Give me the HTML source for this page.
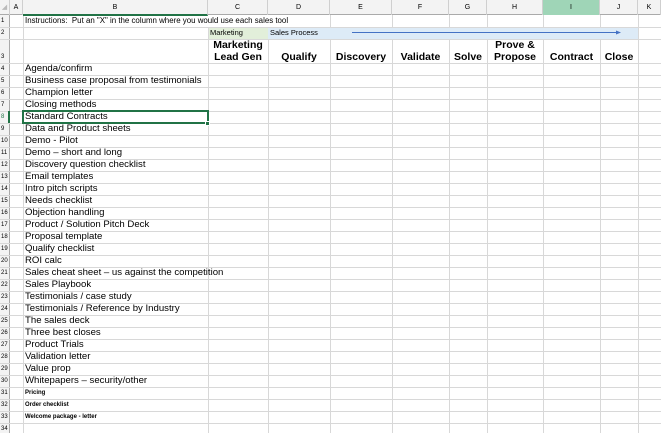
<!DOCTYPE html>
<html><head><meta charset="utf-8"><style>
*{margin:0;padding:0;box-sizing:border-box}
html,body{width:661px;height:433px;overflow:hidden}
body{background:#fff;font-family:"Liberation Sans",sans-serif;position:relative}
.a{position:absolute;white-space:nowrap}
.v{position:absolute;top:39px;height:394px;width:1px;background:#d8d8d8}
.hl{position:absolute;left:0;width:661px;height:1px;background:#d8d8d8}
.ch{position:absolute;top:0;height:15px;font-size:7px;text-align:center;line-height:15px;border-right:1px solid #cfcfcf}
.rn{position:absolute;left:1px;font-size:6px;line-height:12px}
.t{position:absolute;left:25px;font-size:9.6px;line-height:12px;white-space:nowrap}
.s{font-size:6px;font-weight:bold}
.hd{position:absolute;top:39px;height:24px;font-weight:bold;font-size:10.5px;text-align:center;line-height:12px;display:flex;align-items:flex-end;justify-content:center}
</style></head><body>
<div class="a" style="left:0;top:0;width:661px;height:15px;background:#f3f3f3;border-bottom:1px solid #aaa"></div>
<div class="a" style="left:0;top:15px;width:10px;height:418px;background:#f3f3f3;border-right:1px solid #aaa"></div>
<div class="a" style="left:208px;top:27px;width:60px;height:12px;background:#e2efda"></div>
<div class="a" style="left:268px;top:27px;width:370px;height:12px;background:#ddebf7"></div>
<div class="hl" style="top:27px"></div><div class="hl" style="top:39px"></div><div class="hl" style="top:63px"></div>
<div class="a" style="left:0;top:75px;width:661px;height:358px;background:repeating-linear-gradient(to bottom,#d8d8d8 0,#d8d8d8 1px,transparent 1px,transparent 12px)"></div>
<div class="v" style="left:23px;top:15px;height:418px"></div><div class="v" style="left:208px;top:27px;height:406px"></div><div class="v" style="left:268px"></div>
<div class="v" style="left:330px"></div><div class="v" style="left:392px"></div><div class="v" style="left:449px"></div>
<div class="v" style="left:487px"></div><div class="v" style="left:543px"></div><div class="v" style="left:600px"></div>
<div class="v" style="left:638px;top:15px;height:418px"></div>
<div class="a" style="left:330px;top:15px;width:1px;height:12px;background:#d8d8d8"></div>
<div class="a" style="left:392px;top:15px;width:1px;height:12px;background:#d8d8d8"></div>
<div class="a" style="left:449px;top:15px;width:1px;height:12px;background:#d8d8d8"></div>
<div class="a" style="left:487px;top:15px;width:1px;height:12px;background:#d8d8d8"></div>
<div class="a" style="left:543px;top:15px;width:1px;height:12px;background:#d8d8d8"></div>
<div class="a" style="left:600px;top:15px;width:1px;height:12px;background:#d8d8d8"></div>
<div class="ch" style="left:0;width:10px;color:#bbb">◢</div>
<div class="ch" style="left:10px;width:13px">A</div>
<div class="ch" style="left:23px;width:185px;border-bottom:2px solid #217346;height:16px">B</div>
<div class="ch" style="left:208px;width:60px">C</div>
<div class="ch" style="left:268px;width:62px">D</div>
<div class="ch" style="left:330px;width:62px">E</div>
<div class="ch" style="left:392px;width:57px">F</div>
<div class="ch" style="left:449px;width:38px">G</div>
<div class="ch" style="left:487px;width:56px">H</div>
<div class="ch" style="left:543px;width:57px;background:#9fd5b7">I</div>
<div class="ch" style="left:600px;width:38px">J</div>
<div class="ch" style="left:638px;width:23px">K</div>
<div class="rn" style="top:15px">1</div><div class="rn" style="top:27px">2</div><div class="rn" style="top:51px">3</div>
<div class="rn" style="top:63px">4</div><div class="rn" style="top:75px">5</div><div class="rn" style="top:87px">6</div><div class="rn" style="top:99px">7</div><div class="rn" style="top:111px;color:#217346">8</div><div class="rn" style="top:123px">9</div><div class="rn" style="top:135px">10</div><div class="rn" style="top:147px">11</div><div class="rn" style="top:159px">12</div><div class="rn" style="top:171px">13</div><div class="rn" style="top:183px">14</div><div class="rn" style="top:195px">15</div><div class="rn" style="top:207px">16</div><div class="rn" style="top:219px">17</div><div class="rn" style="top:231px">18</div><div class="rn" style="top:243px">19</div><div class="rn" style="top:255px">20</div><div class="rn" style="top:267px">21</div><div class="rn" style="top:279px">22</div><div class="rn" style="top:291px">23</div><div class="rn" style="top:303px">24</div><div class="rn" style="top:315px">25</div><div class="rn" style="top:327px">26</div><div class="rn" style="top:339px">27</div><div class="rn" style="top:351px">28</div><div class="rn" style="top:363px">29</div><div class="rn" style="top:375px">30</div><div class="rn" style="top:387px">31</div><div class="rn" style="top:399px">32</div><div class="rn" style="top:411px">33</div><div class="rn" style="top:423px">34</div>
<div class="a" style="left:8px;top:111px;width:2px;height:12px;background:#217346"></div>
<div class="a" style="left:25px;top:15px;font-size:7.9px;line-height:12px">Instructions:&nbsp; Put an "X" in the column where you would use each sales tool</div>
<div class="a" style="left:210px;top:27px;font-size:7.5px;line-height:12px">Marketing</div>
<div class="a" style="left:270px;top:27px;font-size:7.5px;line-height:12px">Sales Process</div>
<svg class="a" style="left:0;top:0" width="661" height="433">
<line x1="352" y1="32.5" x2="618" y2="32.5" stroke="#4472c4" stroke-width="1"/>
<polygon points="616,30.5 621,32.5 616,34.5" fill="#4472c4"/>
</svg>
<div class="hd" style="left:208px;width:60px">Marketing<br>Lead Gen</div>
<div class="hd" style="left:268px;width:62px">Qualify</div>
<div class="hd" style="left:330px;width:62px">Discovery</div>
<div class="hd" style="left:392px;width:57px">Validate</div>
<div class="hd" style="left:449px;width:38px">Solve</div>
<div class="hd" style="left:487px;width:56px">Prove &amp;<br>Propose</div>
<div class="hd" style="left:543px;width:57px">Contract</div>
<div class="hd" style="left:600px;width:38px">Close</div>
<div class="t" style="top:63px">Agenda/confirm</div>
<div class="t" style="top:75px">Business case proposal from testimonials</div>
<div class="t" style="top:87px">Champion letter</div>
<div class="t" style="top:99px">Closing methods</div>
<div class="t" style="top:111px">Standard Contracts</div>
<div class="t" style="top:123px">Data and Product sheets</div>
<div class="t" style="top:135px">Demo - Pilot</div>
<div class="t" style="top:147px">Demo – short and long</div>
<div class="t" style="top:159px">Discovery question checklist</div>
<div class="t" style="top:171px">Email templates</div>
<div class="t" style="top:183px">Intro pitch scripts</div>
<div class="t" style="top:195px">Needs checklist</div>
<div class="t" style="top:207px">Objection handling</div>
<div class="t" style="top:219px">Product / Solution Pitch Deck</div>
<div class="t" style="top:231px">Proposal template</div>
<div class="t" style="top:243px">Qualify checklist</div>
<div class="t" style="top:255px">ROI calc</div>
<div class="t" style="top:267px">Sales cheat sheet – us against the competition</div>
<div class="t" style="top:279px">Sales Playbook</div>
<div class="t" style="top:291px">Testimonials / case study</div>
<div class="t" style="top:303px">Testimonials / Reference by Industry</div>
<div class="t" style="top:315px">The sales deck</div>
<div class="t" style="top:327px">Three best closes</div>
<div class="t" style="top:339px">Product Trials</div>
<div class="t" style="top:351px">Validation letter</div>
<div class="t" style="top:363px">Value prop</div>
<div class="t" style="top:375px">Whitepapers – security/other</div>
<div class="t s" style="top:387px">Pricing</div>
<div class="t s" style="top:399px">Order checklist</div>
<div class="t s" style="top:411px">Welcome package - letter</div>
<div class="a" style="left:22px;top:110px;width:187px;height:14px;border:2px solid #217346"></div>
<div class="a" style="left:205px;top:121px;width:5px;height:5px;background:#217346;border:1px solid #fff"></div>
</body></html>
